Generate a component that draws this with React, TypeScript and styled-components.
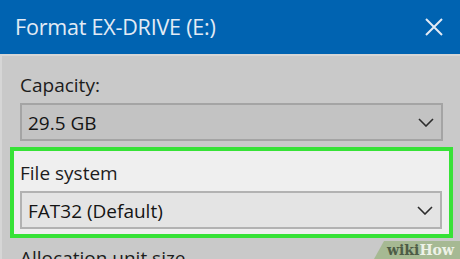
import React from 'react';
import styled, { createGlobalStyle } from 'styled-components';

const GlobalStyle = createGlobalStyle`
  html, body {
    margin: 0;
    padding: 0;
    background: #c9c9c9;
    overflow: hidden;
  }
  #root {
    width: 460px;
    height: 259px;
    overflow: hidden;
  }
`;

function Chevron() {
  return (
    <svg width="16" height="9" viewBox="0 0 16 9">
      <path d="M1 1 L8 8 L15 1" fill="none" stroke="#2c2c2c" strokeWidth="1.6" />
    </svg>
  );
}

function App() {
  return (
    <Window>
      <GlobalStyle />
      <TitleBar>
        <Title>Format EX-DRIVE (E:)</Title>
        <svg width="18" height="18" viewBox="0 0 18 18">
          <path d="M1 1 L17 17 M17 1 L1 17" stroke="#e3ebf5" strokeWidth="2" />
        </svg>
      </TitleBar>
      <Body>
        <Field>
          <Label>Capacity:</Label>
          <Select tone="dark">
            <span>29.5 GB</span>
            <Chevron />
          </Select>
        </Field>
        <Highlight>
          <Label>File system</Label>
          <Select tone="light">
            <span>FAT32 (Default)</span>
            <Chevron />
          </Select>
        </Highlight>
        <Field>
          <Label>Allocation unit size</Label>
        </Field>
      </Body>
      <Watermark>
        <span className="wiki">wiki</span>
        <span className="how">How</span>
      </Watermark>
    </Window>
  );
}

export default App;

const Window = styled.div`
  position: relative;
  width: 460px;
  height: 259px;
  font-family: 'Open Sans', 'Noto Sans', sans-serif;
  background: #c9c9c9;
`;

const TitleBar = styled.div`
  height: 54px;
  background: #0063b1;
  display: flex;
  align-items: center;
  justify-content: space-between;
  padding: 0 17px 0 15px;
  box-sizing: border-box;
`;

const Title = styled.div`
  color: #e3ebf5;
  font-size: 21.5px;
  letter-spacing: -0.2px;
  margin-top: -1px;
`;

const Body = styled.div`
  border-top: 2px solid #d6d6d6;
  border-left: 2px solid #d6d6d6;
  padding: 16px 0 0 0;
  display: flex;
  flex-direction: column;
`;

const Field = styled.div`
  padding: 0 17px 0 18px;
`;

const Label = styled.div`
  color: #1c1c1c;
  font-size: 19px;
  line-height: 26px;
  margin-bottom: 5px;
`;

const Select = styled.div<{ tone: 'dark' | 'light' }>`
  height: 38px;
  box-sizing: border-box;
  border: 2px solid ${(p) => (p.tone === 'dark' ? '#a4a4a4' : '#b2b2b2')};
  background: ${(p) => (p.tone === 'dark' ? '#c3c3c3' : '#e4e4e4')};
  display: flex;
  align-items: center;
  justify-content: space-between;
  padding: 0 7px 0 6px;
  color: #141414;
  font-size: 19px;

  span {
    margin-top: 1px;
  }
`;

const Highlight = styled.div`
  margin: 6px 7px 7px 8px;
  border: 4px solid #36e236;
  background: #efefef;
  padding: 9px 7px 5px 6px;
  height: 91px;
  box-sizing: border-box;
`;

const Watermark = styled.div`
  position: absolute;
  right: 0;
  bottom: 0;
  width: 80px;
  height: 18px;
  padding-right: 6px;
  background: rgba(160, 182, 138, 0.85);
  clip-path: polygon(10px 0, 100% 0, 100% 100%, 0 100%);
  display: flex;
  align-items: center;
  justify-content: flex-end;
  font-family: 'DejaVu Serif', serif;
  font-weight: bold;
  font-size: 14px;

  .wiki {
    color: #4d5c46;
  }
  .how {
    color: #eef2e8;
  }
`;
